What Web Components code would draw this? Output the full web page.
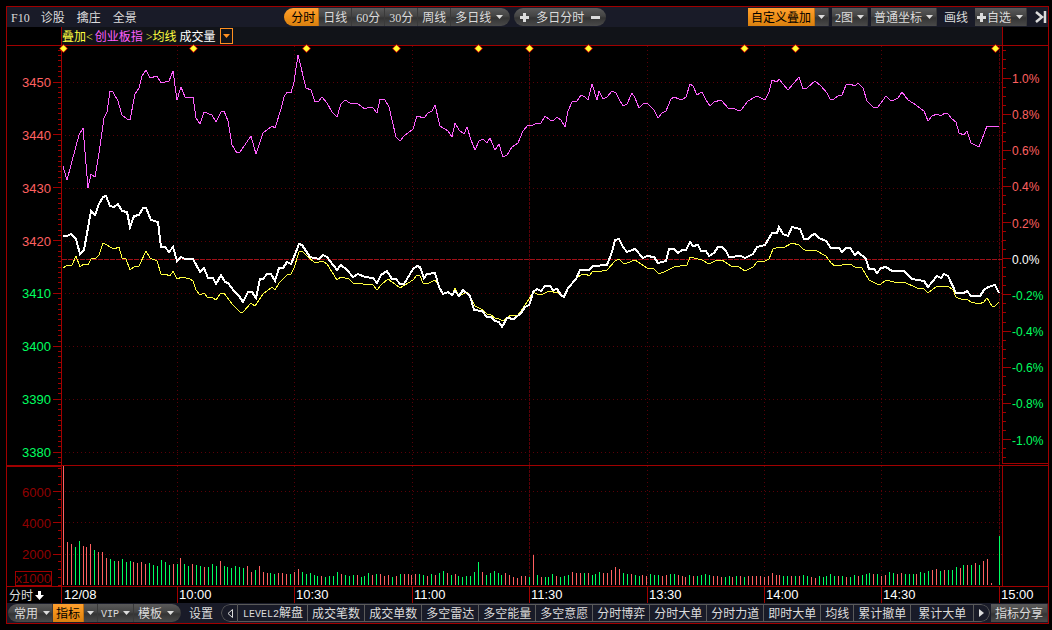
<!DOCTYPE html>
<html lang="zh-CN">
<head>
<meta charset="utf-8">
<title>分时</title>
<style>
  body {
    margin: 6px 3px 6px 6px;
    background: #000;
    color: #dcdcdc;
    font: 12px/16px "Liberation Serif", "Noto Sans CJK SC", serif;
    --line: #a00000;
    --up: #ff6060;
    --down: #00ff60;
  }
  .latin { font-family: "Liberation Mono", monospace; font-size: 10px; }
</style>
</head>
<body>

<trade-frame>
  <tool-row slot="top">
    <tool-group>
      <tool-button plain>F10</tool-button>
      <tool-button plain>诊股</tool-button>
      <tool-button plain>擒庄</tool-button>
      <tool-button plain>全景</tool-button>
    </tool-group>
    <tool-group gap="4">
      <tool-group pill>
        <tool-button active wide>分时</tool-button>
        <tool-button>日线</tool-button>
        <tool-button>60分</tool-button>
        <tool-button>30分</tool-button>
        <tool-button>周线</tool-button>
        <tool-button menu wide>多日线</tool-button>
      </tool-group>
      <tool-group pill>
        <tool-button icon="plus" label="加一日"></tool-button>
        <tool-button flat>多日分时</tool-button>
        <tool-button icon="minus" label="减一日"></tool-button>
      </tool-group>
    </tool-group>
    <tool-group gap="3">
      <tool-group>
        <tool-button active>自定义叠加</tool-button>
        <tool-button icon="caret" label="叠加菜单"></tool-button>
      </tool-group>
      <tool-button menu>2图</tool-button>
      <tool-button menu>普通坐标</tool-button>
      <tool-button plain snug>画线</tool-button>
      <tool-button menu plus>自选</tool-button>
      <tool-button icon="end" plain label="收起"></tool-button>
    </tool-group>
  </tool-row>

  <legend-row slot="legend"></legend-row>

  <scale-axis slot="price-axis" side="left" first="36" pitch="52.86" units="419" minor="10"
    labels="3450 3440 3430 3420 3410 3400 3390 3380" split="4"></scale-axis>
  <price-plot slot="price"></price-plot>
  <scale-axis slot="pct-axis" side="right" first="32" pitch="36.15" units="417" minor="4"
    labels="1.0% 0.8% 0.6% 0.4% 0.2% 0.0% -0.2% -0.4% -0.6% -0.8% -1.0%" split="6" zero="5"></scale-axis>

  <scale-axis slot="volume-axis" side="left" first="25" pitch="31.4" units="120" minor="4"
    labels="6000 4000 2000" dim>x1000</scale-axis>
  <volume-plot slot="volume"></volume-plot>

  <time-row slot="time"></time-row>

  <tool-row slot="bottom">
    <tool-group gap="7">
      <tool-group pill>
        <tool-button menu>常用</tool-button>
        <tool-button active>指标</tool-button>
        <tool-button icon="caret" label="指标菜单"></tool-button>
        <tool-button menu><span class="latin">VIP</span></tool-button>
        <tool-button menu wide>模板</tool-button>
      </tool-group>
      <tool-button bare>设置</tool-button>
      <tool-group pill>
        <tool-button icon="prev" dark label="向前"></tool-button>
        <tool-button dark roomy><span class="latin">LEVEL2</span>解盘</tool-button>
        <tool-button dark>成交笔数</tool-button>
        <tool-button dark>成交单数</tool-button>
        <tool-button dark>多空雷达</tool-button>
        <tool-button dark>多空能量</tool-button>
        <tool-button dark>多空意愿</tool-button>
        <tool-button dark>分时博弈</tool-button>
        <tool-button dark>分时大单</tool-button>
        <tool-button dark>分时力道</tool-button>
        <tool-button dark>即时大单</tool-button>
        <tool-button dark>均线</tool-button>
        <tool-button dark>累计撤单</tool-button>
        <tool-button dark roomier>累计大单</tool-button>
        <tool-button icon="next" dark label="向后"></tool-button>
      </tool-group>
    </tool-group>
    <tool-button>指标分享</tool-button>
  </tool-row>
</trade-frame>

<script>
// x of the half-hour lines, in plot units (the plot spans 62..1002)
const HOURS = [177, 294, 412, 529, 647, 764, 881, 999];

const OVERLAY = "63,166 67,180 79,135 83,128 88,188 91,174 95,177 99,153 104,118 107,112 110,91 113,92 118,101 122,115 127,119 130,120 135,94 139,88 142,76 146,70 150,78 157,76 161,83 169,81 173,71 177,100 181,87 185,97 193,97 196,118 200,124 204,112 212,115 216,122 221,112 224,111 228,121 232,145 237,153 240,152 251,136 256,154 263,133 272,126 275,128 281,109 284,97 287,92 291,93 294,82 298,55 306,88 311,90 315,102 319,101 322,97 327,103 332,112 337,117 341,104 345,100 350,103 357,103 365,109 369,107 373,108 377,113 380,99 385,100 389,107 396,137 400,141 404,136 408,133 413,129 417,116 424,118 428,113 432,111 435,105 440,126 448,131 452,137 455,123 459,130 464,134 467,127 471,140 475,150 479,141 483,139 487,143 490,138 495,150 499,144 503,157 507,155 512,147 518,143 523,131 528,125 533,125 537,123 541,123 545,116 550,120 553,121 557,117 561,120 565,127 568,111 572,102 577,101 581,95 585,97 588,100 592,84 597,100 599,91 603,99 607,97 612,91 616,93 619,99 623,106 627,104 632,93 635,98 639,108 643,104 647,103 654,110 658,118 662,113 666,111 671,99 674,97 679,99 683,99 686,97 690,84 693,86 697,95 702,92 706,100 710,106 714,102 721,100 729,109 733,108 737,110 741,110 748,101 757,96 765,100 769,92 772,80 777,82 779,79 788,90 799,77 803,89 807,88 815,81 821,86 827,93 830,99 834,99 839,95 842,95 846,85 850,84 855,86 858,83 863,88 867,101 873,107 878,107 886,96 890,100 894,100 898,98 902,92 908,100 913,103 924,111 928,121 932,116 937,114 941,116 945,113 948,114 952,119 956,122 959,133 964,135 967,131 971,143 979,147 987,126 995,126 999,127";

const PRICE = "63,236 67,236 71,234 76,239 80,254 84,250 91,211 95,215 99,204 103,197 106,196 110,206 114,207 118,204 122,211 127,212 130,227 134,216 139,215 143,208 146,208 151,220 158,222 161,247 165,247 169,252 173,247 177,261 181,257 185,259 193,259 200,272 204,268 208,278 213,278 216,284 221,275 225,282 228,283 234,291 239,296 243,302 248,292 252,292 256,298 260,279 263,279 267,274 271,274 275,281 279,268 283,268 287,262 291,264 294,257 299,244 302,245 310,257 319,259 323,255 327,257 337,270 341,265 347,270 353,277 358,274 365,277 373,278 377,283 381,275 387,271 392,279 396,279 400,284 404,284 413,269 417,266 420,267 424,278 427,274 435,273 439,287 443,294 448,292 452,295 455,291 459,296 463,290 470,296 474,310 482,311 487,317 491,317 495,321 499,322 502,327 507,318 514,319 521,313 525,307 529,305 530,303 533,292 537,289 541,291 545,286 550,286 553,290 557,289 561,295 564,297 568,288 576,279 580,270 589,270 593,266 607,265 612,252 615,240 619,239 623,247 627,252 635,249 643,258 647,256 654,257 658,263 666,261 669,249 674,249 678,253 682,250 686,250 690,242 693,246 698,245 701,251 706,251 709,256 714,253 718,247 722,247 726,251 729,257 741,256 745,258 753,254 757,247 765,245 772,233 777,233 779,227 783,234 788,236 792,227 800,229 804,239 808,239 812,235 815,234 819,238 826,241 831,248 839,248 842,252 846,248 850,248 855,255 858,252 866,259 869,269 874,269 877,273 881,268 886,267 892,271 904,271 912,279 924,281 928,287 937,276 941,278 944,274 948,276 956,293 964,293 967,291 971,296 980,296 984,290 988,287 995,285 999,293";

const AVERAGE = "63,268 68,265 72,265 76,256 80,267 84,264 88,265 91,259 96,258 99,255 103,243 114,249 119,247 122,258 126,259 130,270 134,267 139,266 146,251 150,258 157,261 161,274 165,274 170,276 173,271 177,279 182,277 190,279 193,281 196,290 200,295 204,293 208,298 212,297 216,300 220,294 224,293 232,304 240,312 243,312 251,303 255,306 263,294 272,287 275,290 279,283 287,275 291,274 294,268 299,252 302,251 307,256 315,263 323,261 327,264 337,280 341,277 349,279 353,283 373,285 377,290 381,285 388,279 400,288 408,283 413,280 417,275 420,276 423,283 429,283 435,280 440,288 443,294 448,292 452,295 455,288 459,296 467,292 470,296 475,306 483,310 487,314 491,315 495,318 499,319 503,321 507,318 511,315 517,316 521,311 529,299 533,292 537,294 541,295 549,291 558,293 564,297 568,289 577,278 581,275 586,274 589,276 593,271 597,272 607,270 615,261 619,259 623,263 627,263 635,260 647,268 654,269 659,274 666,271 674,267 687,265 690,257 702,260 709,264 717,260 722,260 731,266 739,267 745,271 753,267 757,262 765,261 769,259 773,249 779,247 783,248 792,243 799,245 803,249 807,251 815,250 826,256 831,263 835,266 850,264 855,267 862,268 869,280 877,284 881,284 886,280 894,282 904,282 917,288 924,289 928,293 937,286 948,286 953,290 956,297 963,300 967,299 971,302 979,304 984,302 987,298 992,306 995,306 999,302";

// one bar per minute: r = up, g = down, then the bar's height
const VOLUME = "r119 r43 r41 g38 g44 r39 r38 r41 g35 r33 r33 r27 g26 g24 r24 g26 g23 g24 r23 r22 r23 r21 g22 g20 g19 g25 g23 g20 r21 g21 " +
  "r27 g21 g19 r21 g20 g19 r18 g18 g21 g19 r24 g19 g18 g17 g19 g18 g17 r19 r13 g15 r19 r13 r12 g12 g11 r12 r12 r11 g11 r13 " +
  "r16 g13 g11 g12 g10 g9 r9 g8 g9 g9 g13 r11 g10 g9 g10 r10 g8 g9 g12 r10 g11 r11 r9 r10 g8 r9 g11 r11 r11 r10 " +
  "r11 g11 g10 r9 g11 r10 g12 g14 r12 g10 r11 g9 g8 g9 g9 g13 g23 r13 g10 g12 g14 g12 g10 r12 r10 r8 r7 r9 r9 g8 " +
  "r30 g10 r8 g8 g8 g11 r9 g8 g9 g10 r13 r12 r12 g12 r12 g10 g11 g13 r12 r12 r15 r18 r16 g12 g11 r11 g10 g9 r10 r9 " +
  "g11 g10 g10 r9 r10 g11 g11 r10 r9 r8 g10 r9 g9 g10 g11 g10 r9 r9 r8 g8 g9 r8 g9 r9 g8 r9 r9 r9 r9 r8 " +
  "r9 r12 r10 r10 g9 g9 r9 g9 r9 g10 g9 r8 r7 g9 g8 g9 g11 g9 r9 g9 r8 g8 g10 r9 g10 g11 g12 r11 g11 r9 " +
  "r10 g13 g12 r11 r12 g11 g11 g11 r11 g13 g12 g14 r15 r16 g14 r15 g15 g15 g18 r17 g20 r20 g20 r22 g20 r24 r26 r2 g0 g49";

const ICONS = {
  caret: `<svg width="7" height="4"><path d="M0 0h7L3.500 4z" fill="currentColor"/></svg>`,
  plus: `<svg width="9" height="9"><path d="M3 0h3v3h3v3H6v3H3V6H0V3h3z" fill="currentColor"/></svg>`,
  minus: `<svg width="9" height="3"><path d="M0 0h9v3H0z" fill="currentColor"/></svg>`,
  end: `<svg width="12" height="12"><path d="M1 1l6 5-6 5M10 0v12" fill="none" stroke="currentColor" stroke-width="2.500"/></svg>`,
  prev: `<svg width="7" height="9"><path d="M5.500 .5v8L1 4.500z" fill="none" stroke="currentColor"/></svg>`,
  next: `<svg width="5" height="8"><path d="M0 0l5 4-5 4z" fill="currentColor"/></svg>`
};

class BaseElement extends HTMLElement {
  constructor() {
    super();
    this.attachShadow({ mode: "open" });
  }
  connectedCallback() {
    this.shadowRoot.innerHTML = this.render();
  }
}

class TradeFrame extends BaseElement {
  render() {
    return `
      <style>
        :host {
          display: flex;
          flex-direction: column;
          box-sizing: border-box;
          min-height: calc(100vh - 12px);
          border: 1px solid var(--line);
        }
        .row {
          display: grid;
          grid-template-columns: 55px 1fr 46px;
          border-bottom: 1px solid var(--line);
        }
        .legend { height: 18px; }
        .price { flex: 419 0 0; min-height: 200px; }
        .volume { flex: 120 0 0; min-height: 60px; }
        .left { border-right: 1px solid var(--line); display: grid; }
        .mid { display: grid; min-width: 0; }
        .right { border-left: 1px solid var(--line); display: grid; }
        .price .right { border-bottom: 1px solid var(--line); margin-bottom: 1px; }
        .volume .left { border-top: 1px solid var(--line); }
      </style>
      <slot name="top"></slot>
      <div class="row legend">
        <div class="left"></div>
        <div class="mid"><slot name="legend"></slot></div>
        <div class="right"></div>
      </div>
      <div class="row price">
        <div class="left"><slot name="price-axis"></slot></div>
        <div class="mid"><slot name="price"></slot></div>
        <div class="right"><slot name="pct-axis"></slot></div>
      </div>
      <div class="row volume">
        <div class="left"><slot name="volume-axis"></slot></div>
        <div class="mid"><slot name="volume"></slot></div>
        <div class="right"></div>
      </div>
      <slot name="time"></slot>
      <slot name="bottom"></slot>
    `;
  }
}

class ToolRow extends BaseElement {
  render() {
    return `
      <style>
        :host {
          display: flex;
          justify-content: space-between;
          align-items: center;
          height: 20px;
          padding-left: 1px;
          background: #191b28;
        }
      </style>
      <slot></slot>
    `;
  }
}

class ToolGroup extends BaseElement {
  render() {
    const gap = this.getAttribute("gap") || 0;
    return `
      <style>
        :host { display: flex; align-items: center; gap: ${gap}px; }
        :host([pill]) { border-radius: 9px; overflow: hidden; }
      </style>
      <slot></slot>
    `;
  }
}

class ToolButton extends BaseElement {
  render() {
    const icon = this.getAttribute("icon");
    const label = this.getAttribute("label");
    return `
      <style>
        :host { display: block; }
        button {
          display: flex;
          align-items: center;
          justify-content: center;
          gap: 4px;
          height: 18px;
          margin: 0;
          padding: 0 4px;
          border: 0;
          border-right: 1px solid #3a3a3a;
          background: linear-gradient(#5a5a5a, #444 45%, #343434 55%, #4a4a4a);
          color: inherit;
          font: inherit;
          white-space: nowrap;
        }
        span { padding-top: 2px; }
        svg { display: block; }
        :host([menu]) button { padding: 0 3px; }
        :host([menu]:first-child) button { gap: 5px; padding: 0 2px 0 6px; }
        :host([menu][wide]) button { gap: 5px; padding: 0 6px 0 4px; }
        :host([menu][plus]) button { gap: 1px; padding: 0 3px 0 2px; }
        :host([plus]) span { padding-right: 4px; }
        :host([icon="caret"]) button { padding: 0 3px; }
        :host([flat]) button { border: 0; padding: 0 1px; }
        :host([icon="plus"]) button, :host([icon="minus"]) button { border: 0; padding: 0 6px; }
        :host([active]) button {
          padding: 0 3px;
          background: linear-gradient(#ffa030, #f09018 50%, #d88010);
          color: #000;
          border-right-color: #c07010;
        }
        :host([active][wide]) button { padding: 0 3px 0 7px; }
        :host([plain]) button { background: none; border: 0; padding: 0 6px; }
        :host([plain]:first-child) button { padding: 0 5px 0 3px; }
        :host([plain][icon]) button { padding: 0 1px 0 5px; }
        :host([plain][snug]) button { padding: 0 4px; }
        :host([bare]) button { background: none; border: 0; padding: 0 1px; }
        :host([dark]) button {
          background: #191b28;
          border: 1px solid #5a5a5a;
          border-width: 1px 1px 1px 0;
        }
        :host([roomy]) button { padding: 0 4px 0 5px; }
        :host([roomier]) button { padding: 0 7px; }
        :host([dark][icon="prev"]) button { border-width: 1px; border-radius: 9px 0 0 9px; padding: 0 3px 0 5px; }
        :host([dark][icon="next"]) button { border-radius: 0 9px 9px 0; padding: 0 5px; }
      </style>
      <button type="button" ${label ? `aria-label="${label}"` : ""} ${this.hasAttribute("menu") ? `aria-haspopup="menu"` : ""}>
        ${this.hasAttribute("plus") ? ICONS.plus : ""}
        ${icon ? ICONS[icon] : "<span><slot></slot></span>"}
        ${this.hasAttribute("menu") ? ICONS.caret : ""}
      </button>
    `;
  }
}

class LegendRow extends BaseElement {
  render() {
    return `
      <style>
        :host {
          display: flex;
          align-items: center;
          background: #111318;
          color: #ffff40;
        }
        span { padding-top: 2px; }
        .overlay { color: #ff60ff; padding-left: 2px; padding-right: 3px; }
        .volume { color: #fff; padding-left: 3px; padding-right: 4px; }
        button {
          display: grid;
          place-items: center;
          width: 13px;
          height: 16px;
          padding: 0;
          border: 1px solid #ff9020;
          background: none;
          color: #ff9020;
        }
      </style>
      <span>叠加&lt;</span>
      <span class="overlay">创业板指</span>
      <span>&gt;均线</span>
      <span class="volume">成交量</span>
      <button type="button" aria-label="指标选择"><svg width="7" height="4"><path d="M0 0h7L3.500 4z" fill="currentColor"/></svg></button>
    `;
  }
}

class ScaleAxis extends BaseElement {
  num(name) {
    return parseFloat(this.getAttribute(name));
  }
  colour(i) {
    if (this.hasAttribute("dim")) return "#900000";
    if (i === this.num("zero")) return "#fff";
    return i >= this.num("split") ? "var(--down)" : "var(--up)";
  }
  render() {
    const left = this.getAttribute("side") === "left";
    const units = this.num("units");
    const first = this.num("first");
    const pitch = this.num("pitch");
    const step = pitch / this.num("minor");
    const pct = (y) => (y / units * 100).toFixed(3) + "%";
    let marks = "";
    for (let y = first % step; y < units; y += step) {
      marks += left
        ? `<line x1="51" x2="54" y1="${pct(y)}" y2="${pct(y)}"/>`
        : `<line x1="0" x2="3" y1="${pct(y)}" y2="${pct(y)}"/>`;
    }
    let texts = "";
    this.getAttribute("labels").split(" ").forEach((text, i) => {
      const y = pct(first + i * pitch);
      marks += left
        ? `<line x1="46" x2="54" y1="${y}" y2="${y}"/>`
        : `<line x1="0" x2="8" y1="${y}" y2="${y}"/>`;
      texts += `<text x="${left ? 44 : 9}" y="${y}" dy="5" fill="${this.colour(i)}">${text}</text>`;
    });
    return `
      <style>
        :host { display: grid; position: relative; min-height: 0; }
        svg { display: block; width: 100%; height: 100%; position: absolute; inset: 0; }
        line { stroke: var(--line); shape-rendering: crispEdges; }
        text { font: ${left ? 13 : 12}px "Liberation Sans", sans-serif; text-anchor: ${left ? "end" : "start"}; }
        .unit {
          align-self: end;
          justify-self: end;
          margin-right: 9px;
          border: 1px solid var(--line);
          color: #900000;
          font: 13px/13px "Liberation Sans", sans-serif;
        }
      </style>
      <svg>${marks}${texts}</svg>
      ${this.textContent.trim() ? `<span class="unit"><slot></slot></span>` : ""}
    `;
  }
}

const PLOT_STYLE = `
  <style>
    :host { display: block; position: relative; min-height: 0; }
    svg { position: absolute; inset: 0; width: 100%; height: 100%; }
    path, polyline { fill: none; vector-effect: non-scaling-stroke; shape-rendering: crispEdges; }
    .dots { stroke: #5a0008; stroke-dasharray: 1 3; }
    .dash { stroke: #5a0008; stroke-dasharray: 3 1; }
    .zero { stroke: #a01018; stroke-dasharray: 5 1; }
    .overlay { stroke: #ff60ff; }
    .average { stroke: #ffff40; }
    .price { stroke: #fff; stroke-width: 2; }
    .up { stroke: var(--up); }
    .down { stroke: var(--down); }
  </style>
`;

function grid(rows, top, bottom) {
  const lines = rows.map((y) => `<path class="dots" d="M65 ${y}.5H1002"/>`);
  HOURS.forEach((x) => {
    lines.push(`<path class="${x === 529 || x === 999 ? "dash" : "dots"}" d="M${x}.5 ${top}V${bottom}"/>`);
  });
  return lines.join("");
}

class PricePlot extends BaseElement {
  render() {
    const marks = [63, 193, 306, 396, 478, 529, 588, 744, 795, 995];
    return `
      ${PLOT_STYLE}
      <style>
        .mark { fill: #ffff30; shape-rendering: auto; }
        .edge { fill: #c00000; shape-rendering: auto; }
      </style>
      <svg viewBox="62 46 940 419" preserveAspectRatio="none" overflow="visible">
        ${grid([82, 135, 188, 241, 293, 346, 399, 452], 46, 465)}
        <path class="zero" d="M62 259.500H1002"/>
        <polyline class="overlay" points="${OVERLAY}"/>
        <polyline class="average" points="${AVERAGE}"/>
        <polyline class="price" points="${PRICE}"/>
        ${marks.map((x) => `
          <path class="edge" d="M${x - 4} 48.500l4.500 -4.500l4.500 4.500l-4.500 4.500z"/>
          <path class="mark" d="M${x - 3} 48.500l3.500 -3.500l3.500 3.500l-3.500 3.500z"/>`).join("")}
      </svg>
    `;
  }
}

class VolumePlot extends BaseElement {
  render() {
    const bars = { r: "", g: "" };
    VOLUME.split(" ").forEach((bar, i) => {
      const x = Math.round(63 + i * 3.915) + 0.5;
      bars[bar[0]] += `M${x} 585v-${bar.slice(1)}`;
    });
    return `
      ${PLOT_STYLE}
      <svg viewBox="62 466 940 120" preserveAspectRatio="none">
        ${grid([491, 522, 554], 466, 586)}
        <path class="up" d="${bars.r}"/>
        <path class="down" d="${bars.g}"/>
      </svg>
    `;
  }
}

class TimeRow extends BaseElement {
  render() {
    const times = ["12/08", "10:00", "10:30", "11:00", "11:30", "13:30", "14:00", "14:30", "15:00"];
    return `
      <style>
        :host {
          display: grid;
          grid-template-columns: 55px 115fr 117fr 118fr 117fr 118fr 117fr 117fr 118fr 49px;
          height: 16px;
          color: #fff;
          font: 13px/16px "Liberation Sans", sans-serif;
        }
        .mode {
          display: flex;
          align-items: center;
          gap: 2px;
          padding-left: 2px;
          font: 12px/16px "Noto Sans CJK SC", sans-serif;
          color: #dcdcdc;
          border-right: 1px solid var(--line);
        }
        time { padding-left: 2px; }
        time + time { padding-left: 1px; border-left: 1px solid var(--line); }
      </style>
      <span class="mode">分时<svg width="9" height="9"><path d="M3 0h3v4h3L4.500 9 0 4h3z" fill="#fff"/></svg></span>
      ${times.map((t) => `<time>${t}</time>`).join("")}
    `;
  }
}

customElements.define("tool-row", ToolRow);
customElements.define("tool-group", ToolGroup);
customElements.define("tool-button", ToolButton);
customElements.define("legend-row", LegendRow);
customElements.define("scale-axis", ScaleAxis);
customElements.define("price-plot", PricePlot);
customElements.define("volume-plot", VolumePlot);
customElements.define("time-row", TimeRow);
customElements.define("trade-frame", TradeFrame);
</script>
</body>
</html>
